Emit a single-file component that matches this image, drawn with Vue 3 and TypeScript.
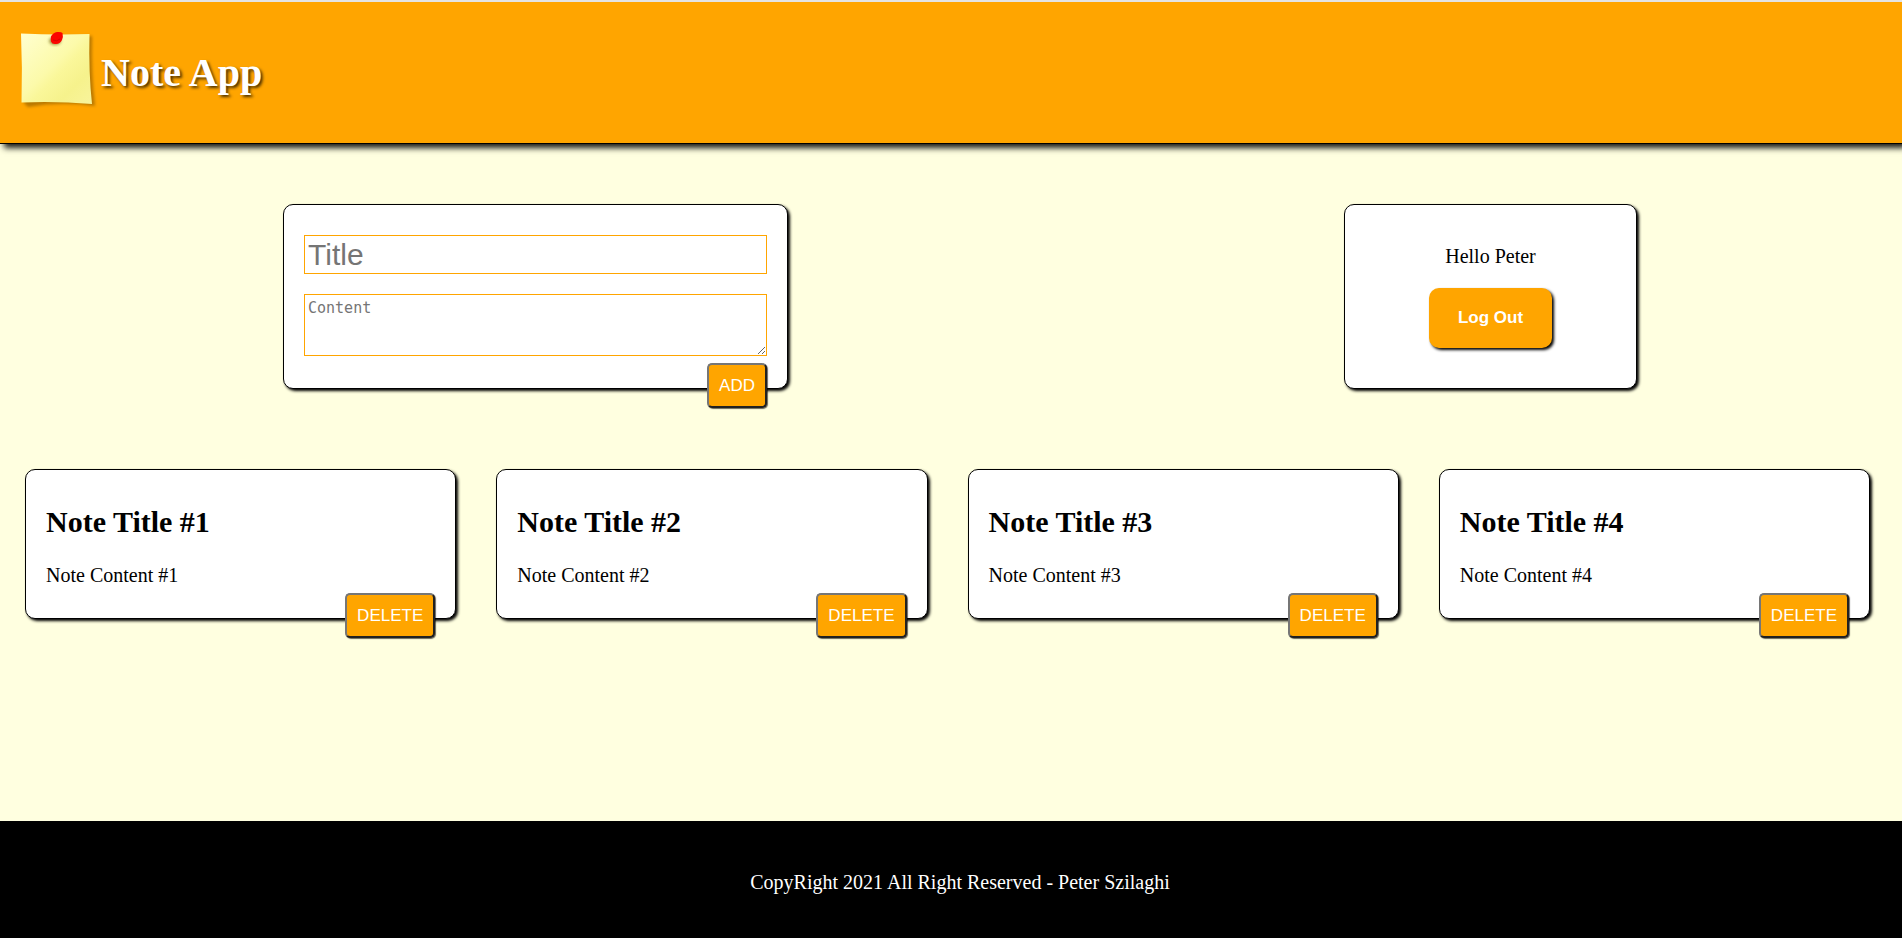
<script setup lang="ts">
import { ref } from 'vue'

interface Note {
  id: number
  title: string
  content: string
}

const userName = 'Peter'
const loggedIn = ref(true)
const title = ref('')
const content = ref('')
const notes = ref<Note[]>(
  [1, 2, 3, 4].map((n) => ({ id: n, title: `Note Title #${n}`, content: `Note Content #${n}` })),
)
let nextId = 5

function addNote(): void {
  if (!title.value && !content.value) return
  notes.value.push({ id: nextId++, title: title.value, content: content.value })
  title.value = ''
  content.value = ''
}

function deleteNote(id: number): void {
  notes.value = notes.value.filter((note) => note.id !== id)
}
</script>

<template>
  <div class="app">
    <header class="header">
      <svg class="logo" viewBox="0 0 80 85" aria-hidden="true">
        <defs>
          <linearGradient id="paper" x1="0" y1="0" x2="1" y2="1">
            <stop offset="0" stop-color="#ffffd0" />
            <stop offset="0.45" stop-color="#fcfaaa" />
            <stop offset="0.55" stop-color="#faf79a" />
            <stop offset="0.75" stop-color="#f6f28c" />
            <stop offset="1" stop-color="#f8f49c" />
          </linearGradient>
          <filter id="soft" x="-20%" y="-20%" width="140%" height="140%">
            <feGaussianBlur stdDeviation="1.5" />
          </filter>
        </defs>
        <path
          d="M5 7 L72 6 Q71 45 75 76 Q40 71 8 77 L4 73Z"
          fill="#8a5a00"
          opacity="0.6"
          filter="url(#soft)"
        />
        <path d="M1 3.5 Q35 5 69.5 4 Q68.5 42 72 74 Q36 71 1.5 72.5 Q2.5 38 1 3.5Z" fill="url(#paper)" />
        <ellipse cx="35" cy="11" rx="6" ry="4" fill="#8a7a20" opacity="0.8" filter="url(#soft)" />
        <path
          d="M31 6.500 Q33 2.500 37 2 Q41 1.500 42.500 3 Q43.500 7 42 10 Q40 14 36 14 Q32 14.500 31 11.500 Q30.500 9 31 6.500Z"
          fill="#fb0500"
        />
        <path d="M33 10 Q37 12 40 9" fill="none" stroke="#dc0000" stroke-width="1" />
      </svg>
      <h1 class="brand">Note App</h1>
    </header>

    <main class="main">
      <section class="top">
        <form class="card create" @submit.prevent="addNote">
          <input v-model="title" class="field title-field" type="text" placeholder="Title" aria-label="Title" />
          <textarea
            v-model="content"
            class="field content-field"
            placeholder="Content"
            aria-label="Content"
          ></textarea>
          <button class="action" type="submit">ADD</button>
        </form>
        <div v-if="loggedIn" class="card account">
          <p class="text">Hello {{ userName }}</p>
          <button class="logout" type="button" @click="loggedIn = false">Log Out</button>
        </div>
      </section>

      <section class="notes">
        <article v-for="note in notes" :key="note.id" class="card note">
          <h2 class="note-title">{{ note.title }}</h2>
          <p class="text">{{ note.content }}</p>
          <button class="action" type="button" @click="deleteNote(note.id)">DELETE</button>
        </article>
      </section>
    </main>

    <footer class="footer">
      <p class="text">CopyRight 2021 All Right Reserved - Peter Szilaghi</p>
    </footer>
  </div>
</template>

<style>
body {
  margin: 0;
  background: #ffffe0;
}
</style>

<style scoped>
.app {
  display: flex;
  flex-direction: column;
  min-height: 100vh;
  box-sizing: border-box;
  overflow-x: hidden;
  border-top: 2px solid #e4e4e4;
  background: #ffffe0;
  color: #000;
  font-family: 'Liberation Serif', 'Times New Roman', serif;
  font-size: 20px;
  line-height: 23px;
}

.header {
  display: flex;
  align-items: center;
  gap: 1px;
  padding: 28px 20px;
  background: #ffa500;
  border-bottom: 1px solid #000;
  box-shadow: 4px 4px 6px rgba(0, 0, 0, 0.9);
}

.logo {
  width: 80px;
  height: 85px;
}

.brand {
  margin: 0;
  color: #fff;
  font-size: 40px;
  line-height: 46px;
  text-shadow: 2px 2px 3px rgba(0, 0, 0, 0.7);
}

.text {
  margin: 0;
}

.main {
  padding-top: 60px;
}

.top {
  display: flex;
  justify-content: space-around;
  margin: 0 -13px 80px 5px;
}

.card {
  position: relative;
  box-sizing: border-box;
  background: #fff;
  border: 1px solid #000;
  border-radius: 10px;
  box-shadow: 2px 2px 3px #000;
}

.create {
  display: flex;
  flex-direction: column;
  gap: 20px;
  width: 505px;
  padding: 30px 20px 32px;
}

.field {
  box-sizing: border-box;
  width: 100%;
  margin: 0;
  border: 1px solid #ffa500;
  border-radius: 0;
  background: #fff;
  outline: none;
}

.field::placeholder {
  color: #757575;
}

.title-field {
  height: 39px;
  padding: 1px 3px;
  font: 30px 'Liberation Sans', Arial, sans-serif;
}

.content-field {
  height: 62px;
  padding: 4px 3px;
  font: 15px 'DejaVu Sans Mono', monospace;
}

.action {
  position: absolute;
  right: 20px;
  bottom: -20px;
  height: 45px;
  padding: 0 10px;
  color: #fff;
  background: #ffa500;
  border: 2px solid;
  border-color: #767676 #212121 #212121 #767676;
  border-radius: 5px;
  box-shadow: 1px 1px 1px rgba(0, 0, 0, 0.6);
  font: 17px 'Liberation Sans', Arial, sans-serif;
  cursor: pointer;
}

.account {
  display: flex;
  flex-direction: column;
  align-items: center;
  gap: 20px;
  width: 293px;
  padding: 40px 20px;
}

.logout {
  height: 60px;
  padding: 0 29px;
  color: #fff;
  background: #ffa500;
  border: 0;
  border-radius: 10px;
  box-shadow: 2px 2px 3px #000;
  font: bold 17px 'Liberation Sans', Arial, sans-serif;
  cursor: pointer;
}

.notes {
  display: grid;
  grid-template-columns: repeat(4, 1fr);
  gap: 40px;
  padding: 0 32px 60px 25px;
}

.note {
  padding: 35px 20px 31px;
}

.note-title {
  margin: 0 0 25px;
  font-size: 30px;
  line-height: 34px;
}

.footer {
  margin-top: auto;
  padding: 50px 0 44px 18px;
  background: #000;
  color: #fff;
  text-align: center;
}
</style>
